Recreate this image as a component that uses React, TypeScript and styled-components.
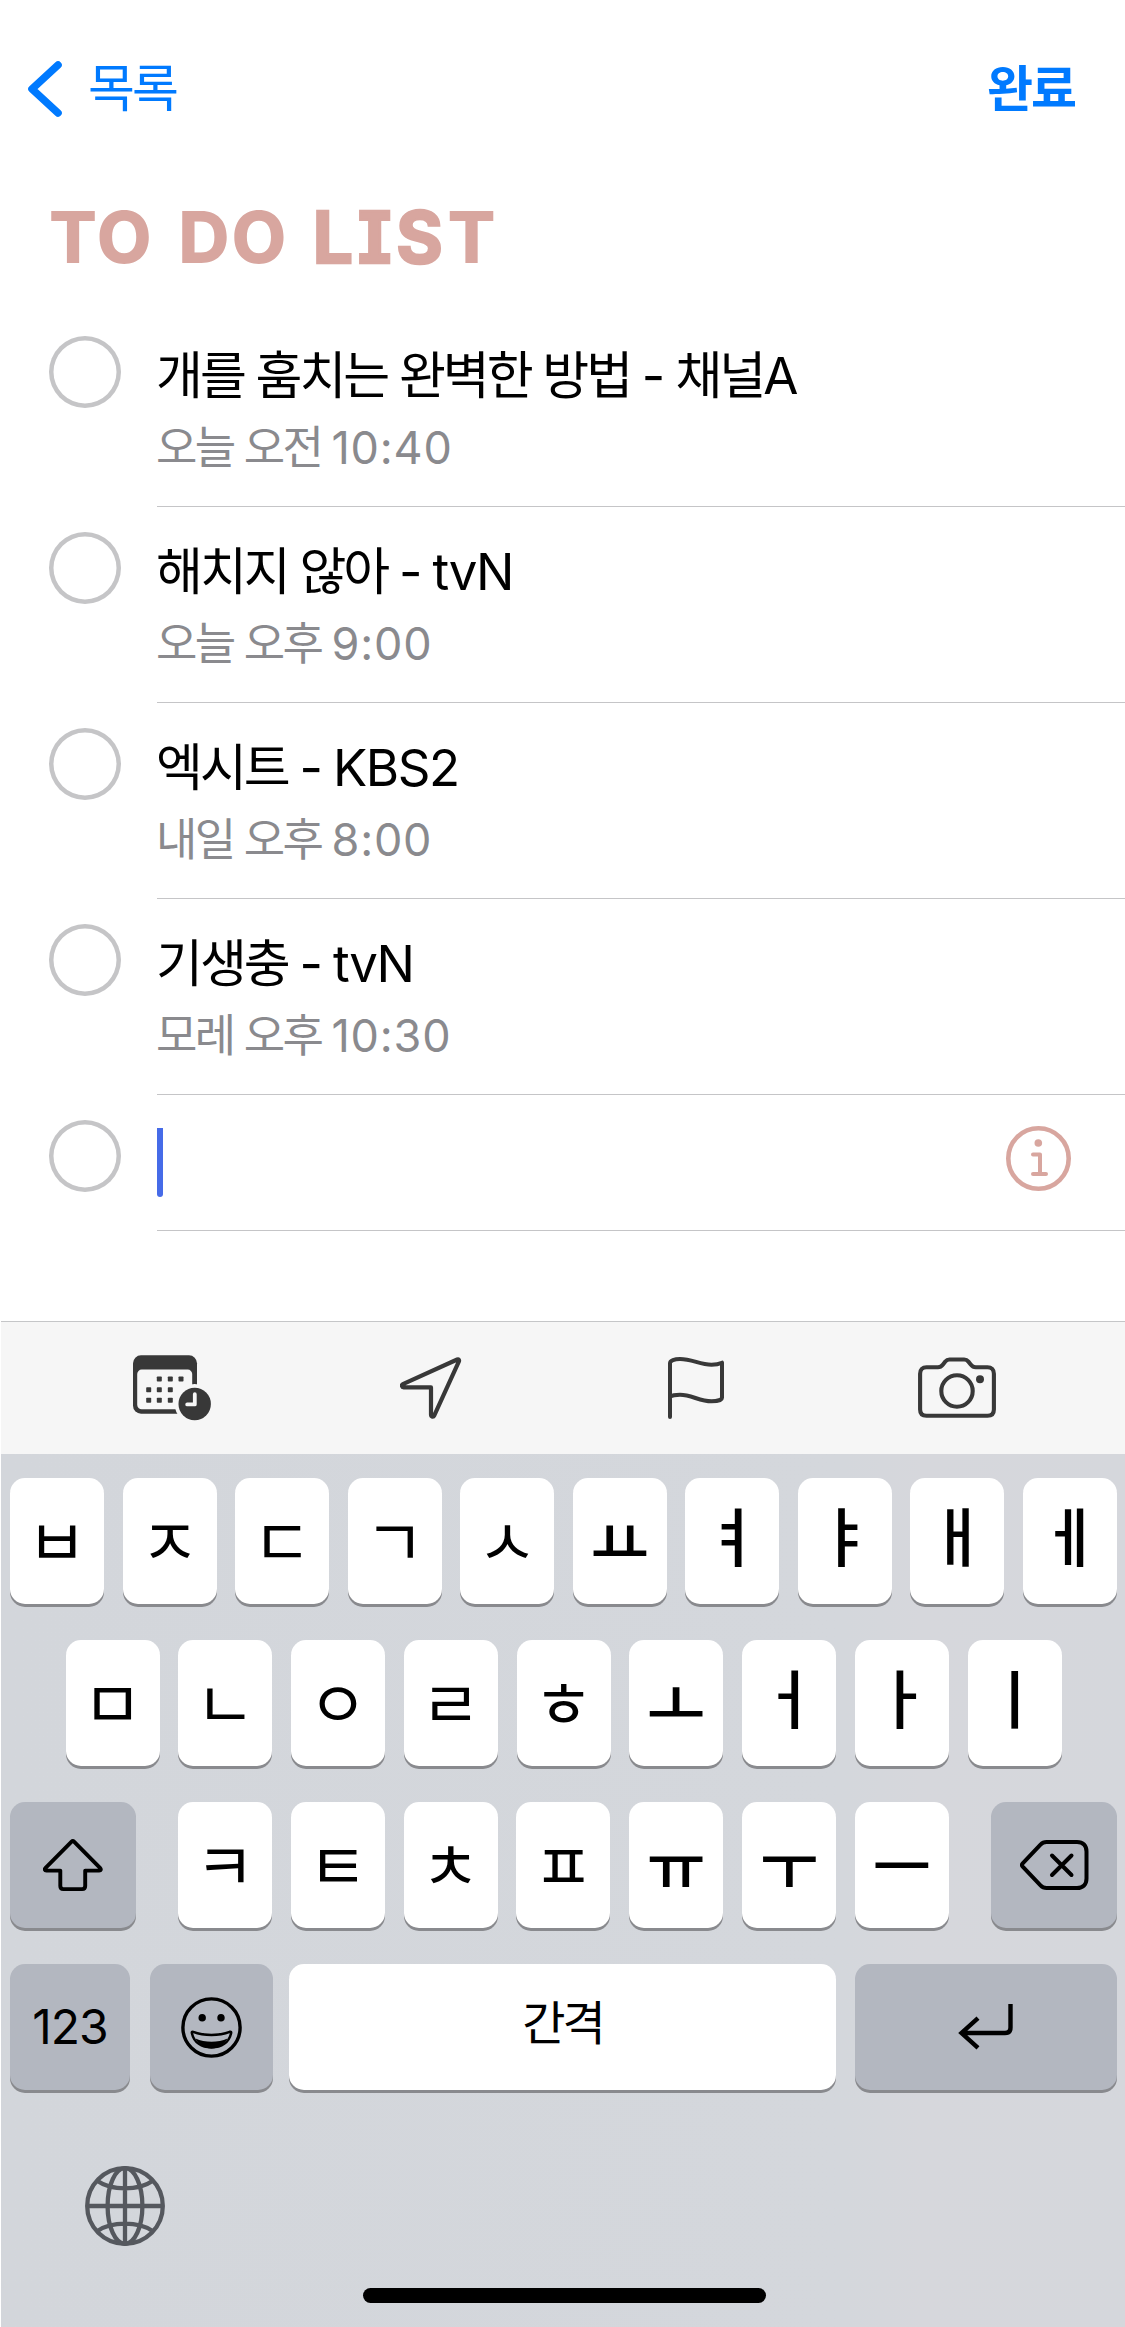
import React from "react";
import styled, { createGlobalStyle } from "styled-components";

const INK = "#383838";
const ROSE = "#d8a69f";
const BLUE = "#007aff";

const GlobalStyle = createGlobalStyle`
  * { box-sizing: border-box; }
  html, body { margin: 0; padding: 0; background: #fff; }
  body { font-family: Inter, "Noto Sans CJK KR", sans-serif; color: #000; }
`;

const Screen = styled.div`
  width: 1125px;
  height: 2327px;
  display: flex;
  flex-direction: column;
  background: #fff;
  overflow: hidden;
  white-space: nowrap;
`;

const Header = styled.header`
  height: 178px;
  padding: 0 50px 0 27px;
  display: flex;
  align-items: center;
  justify-content: space-between;
  color: ${BLUE};
`;

const BackLink = styled.div`
  display: flex;
  align-items: center;
  gap: 25px;
`;

const NavLabel = styled.span<{ $bold?: boolean }>`
  height: 60px;
  line-height: 60px;
  font-size: ${(p) => (p.$bold ? 50 : 51)}px;
  font-weight: ${(p) => (p.$bold ? 700 : 400)};
  letter-spacing: ${(p) => (p.$bold ? -2 : -3)}px;
`;

const Title = styled.h1`
  margin: 0;
  height: 132px;
  padding: 12px 0 0 49px;
  display: flex;
  line-height: 94px;
  font-size: 71px;
  font-weight: 800;
  letter-spacing: 2px;
  word-spacing: 7px;
  font-feature-settings: "cv08" 1;
  white-space: pre;
  color: ${ROSE};
`;

const SoftLetters = styled.span`
  font-weight: 700;
  letter-spacing: 4.7px;
  -webkit-text-stroke: 2.5px ${ROSE};
  stroke-linejoin: round;
`;

const List = styled.main`
  height: 1011px;
  display: flex;
  flex-direction: column;
`;

const Item = styled.section<{ $compact?: boolean }>`
  height: ${(p) => (p.$compact ? 136 : 196)}px;
  padding-left: 49px;
  display: flex;
  gap: 36px;
`;

const Check = styled.span`
  width: 72px;
  height: 72px;
  margin-top: 26px;
  box-shadow: inset 0 0 0 4.5px #c5c5c7;
  border-radius: 50%;
`;

const ItemBody = styled.div`
  flex: 1;
  height: 100%;
  padding-top: 34px;
  transform: translateY(1px);
  border-bottom: 1px solid #c5c5c7;
`;

const ItemTitle = styled.div`
  height: 62px;
  margin-left: -1px;
  line-height: 62px;
  font-size: 51px;
  letter-spacing: -3px;
  word-spacing: 0.3px;
`;

const ItemTime = styled.div`
  height: 56px;
  margin: 13px 0 0 -1px;
  line-height: 56px;
  font-size: 45px;
  letter-spacing: -2.7px;
  word-spacing: 0.4px;
  color: #8a8a8e;
`;

const Latin = styled.span<{ $track: number }>`
  letter-spacing: ${(p) => p.$track}px;
`;

const DraftBody = styled(ItemBody)`
  padding: 0 54px 0 0;
  display: flex;
  justify-content: space-between;
`;

const Caret = styled.span`
  width: 6px;
  height: 69px;
  margin-top: 33px;
  border-radius: 0 0 3px 3px;
  background: #466be8;
`;

const InfoIconBox = styled.span`
  margin-top: 31px;
`;

const Toolbar = styled.nav`
  height: 133px;
  margin-left: 1px;
  padding-left: 132px;
  border-top: 1px solid #c5c6c8;
  display: grid;
  grid-template-columns: 267px 268px 250px 1fr;
  align-items: center;
  background: #f6f6f6;
  svg { display: block; }
`;

const Keyboard = styled.div`
  flex: 1;
  margin-left: 1px;
  padding: 24px 8px 0 9px;
  display: flex;
  flex-direction: column;
  gap: 36px;
  background: linear-gradient(90deg, #d3d6db 0%, #d4d7dc 75%, #d6d7dc 82%, #d5d7dc 100%);
`;

const KeyRow = styled.div<{ $inset?: number }>`
  height: 126px;
  padding: 0 ${(p) => p.$inset ?? 0}px;
  display: flex;
  justify-content: space-between;
`;

const KeyGroup = styled.div`
  width: 771px;
  display: flex;
  justify-content: space-between;
`;

const Key = styled.div<{ $w?: number; $dark?: boolean }>`
  width: ${(p) => p.$w ?? 94}px;
  height: 126px;
  border-radius: 15px;
  display: flex;
  align-items: center;
  justify-content: center;
  background: ${(p) => (p.$dark ? "#b3b7c0" : "#fff")};
  box-shadow: 0 3px 0 #898a8e;
`;

const BottomRow = styled.div`
  height: 126px;
  display: grid;
  grid-template-columns: 139.5px 139.5px 566px 262px;
`;

type JamoKind = "consonant" | "wide" | "tall";

const jamoStyles: Record<JamoKind, { size: number; weight: number; lift: number }> = {
  consonant: { size: 65, weight: 400, lift: 6 },
  wide: { size: 64, weight: 500, lift: 7 },
  tall: { size: 64, weight: 500, lift: 16 },
};

const Jamo = styled.span<{ $kind: JamoKind }>`
  height: 80px;
  line-height: 80px;
  margin-bottom: ${(p) => jamoStyles[p.$kind].lift}px;
  font-family: "Noto Sans CJK KR", sans-serif;
  font-size: ${(p) => jamoStyles[p.$kind].size}px;
  font-weight: ${(p) => jamoStyles[p.$kind].weight};
`;

const KeyLabel = styled.span<{ $size: number; $track: number; $lift?: number }>`
  height: 60px;
  line-height: 60px;
  margin-bottom: ${(p) => p.$lift ?? 0}px;
  font-size: ${(p) => p.$size}px;
  letter-spacing: ${(p) => p.$track}px;
`;

const GlobeRow = styled.div`
  padding: 40px 0 0 75px;
  height: 126px;
`;

const HomeBar = styled.div`
  width: 403px;
  height: 15px;
  margin-left: 353px;
  border-radius: 8px;
  background: #000;
`;

const BackIcon = () => (
  <svg width="36" height="58" viewBox="0 0 36 58" fill="none" stroke={BLUE} strokeWidth="7.6" strokeLinecap="round" strokeLinejoin="round">
    <path d="M31 5 5 29 31 53" />
  </svg>
);

const InfoIcon = () => (
  <svg width="65" height="65" viewBox="0 0 65 65" fill="none" stroke={ROSE} strokeWidth="4.6" strokeLinecap="round" strokeLinejoin="round">
    <circle cx="32.5" cy="32.5" r="30.2" />
    <circle cx="32.3" cy="17" r="3.8" fill={ROSE} stroke="none" />
    <path d="M27 28.5h7v19.5M27 48h13" strokeWidth="4" />
  </svg>
);

const dots = [
  [26.3, 24], [37.3, 24], [48, 24],
  [15.7, 34.7], [26.3, 34.7], [37.3, 34.7],
  [15.7, 45.3], [26.3, 45.3], [37.3, 45.3],
];

const CalendarIcon = () => (
  <svg width="78" height="66" viewBox="0 0 78 66">
    <rect x="0" y="0.3" width="64" height="58.4" rx="8" fill={INK} />
    <rect x="4.2" y="14.6" width="55" height="39.6" rx="4.5" fill="#f6f6f6" />
    {dots.map(([x, y]) => (
      <rect key={`${x}-${y}`} x={x - 2.5} y={y - 2.5} width="5" height="5" rx="0.8" fill={INK} />
    ))}
    <circle cx="61.7" cy="49" r="20" fill="#f6f6f6" />
    <circle cx="61.7" cy="49" r="16.2" fill={INK} />
    <path d="M61.8 39.2v10.2h-7.6" fill="none" stroke="#f6f6f6" strokeWidth="3.8" strokeLinecap="round" strokeLinejoin="round" />
  </svg>
);

const LocationIcon = () => (
  <svg width="62" height="63" viewBox="0 0 62 63" fill="none" stroke={INK} strokeWidth="4.2" strokeLinejoin="round">
    <path d="M57.2 2.5 2.9 27.2c-1.6.8-1.1 3.2.7 3.2H31V57.6c0 2.4 2.4 2.7 3.2 1L58.8 4.6c.7-1.5-.2-2.7-1.6-2.1Z" />
  </svg>
);

const FlagIcon = () => (
  <svg width="57" height="63" viewBox="0 0 57 63" fill="none" stroke={INK} strokeWidth="4" strokeLinecap="round" strokeLinejoin="round">
    <path d="M2 60V6.2C2 3.6 6.5 2 12 2c12 0 20 5.7 31.5 5.7 4.5 0 7.5-.6 10.5-2v35c0 2-4.5 3.6-10.5 3.6C31.5 44.3 23.5 37.8 12 37.8c-4.5 0-8 .7-10 2" />
  </svg>
);

const CameraIcon = () => (
  <svg width="78" height="62" viewBox="0 0 78 62" fill="none" stroke={INK} strokeWidth="4.1" strokeLinejoin="round">
    <path d="M8.5 10.3H20c2.5 0 3.6-1 5-2.8l2.3-2.9c1.2-1.5 2.3-2.1 4.2-2.1h14.7c1.9 0 3 .6 4.2 2.1l2.3 2.9c1.4 1.800 2.5 2.8 5 2.8h11.8c4 0 6.4 2.4 6.4 6.4v35.7c0 4-2.4 6.3-6.4 6.3h-61c-4 0-6.4-2.3-6.4-6.300V16.7c0-4 2.4-6.4 6.4-6.4Z" />
    <circle cx="39" cy="34" r="15.7" />
    <circle cx="62" cy="22.2" r="4" fill={INK} stroke="none" />
  </svg>
);

const ShiftIcon = () => (
  <svg width="60" height="53" viewBox="0 0 60 53" fill="none" stroke="#000" strokeWidth="3.9" strokeLinejoin="round">
    <path d="M28.6 2.6 2.6 28.8c-1.4 1.5-.8 2.8.8 2.8h13.9v15.5c0 2 1 3 3 3h18.9c2 0 3-1 3-3V31.6h14c1.6 0 2.2-1.3.8-2.8L31 2.6c-.8-.8-1.6-.8-2.4 0Z" />
  </svg>
);

const DeleteIcon = () => (
  <svg width="69" height="50" viewBox="0 0 69 50" fill="none" stroke="#000" strokeWidth="4" strokeLinecap="round" strokeLinejoin="round">
    <path d="M2.7 23.3 20.5 4.6C22.3 2.7 24 2 26.5 2H57c6 0 9.5 3.5 9.5 9.5v27c0 6-3.5 9.5-9.5 9.5H26.5c-2.5 0-4.2-.7-6-2.6L2.7 26.7c-1-1.1-1-2.3 0-3.4Z" />
    <path d="m32 15.5 19.5 19.5M51.5 15.5 32 35" />
  </svg>
);

const ReturnIcon = () => (
  <svg width="56" height="47" viewBox="0 0 56 47" fill="none" stroke="#000" strokeWidth="4.4">
    <path d="M52.5 0v23.5c0 3.6-1.8 5.5-5.5 5.5H4M20 14.2 3.5 29 20 43.8" />
  </svg>
);

const SmileIcon = () => (
  <svg width="61" height="61" viewBox="0 0 61 61" fill="none" stroke="#000" strokeWidth="3.4">
    <circle cx="30.5" cy="30.5" r="28.6" />
    <ellipse cx="21.2" cy="20.7" rx="3.7" ry="3.8" fill="#000" stroke="none" />
    <ellipse cx="40" cy="20.7" rx="3.7" ry="3.8" fill="#000" stroke="none" />
    <path d="M12.2 34.800c11 4.2 25.5 4.2 36.5 0 1.2-.4 1.7.2 1.4 1.4C48 45.5 40.5 50.4 30.5 50.4S13 45.5 10.9 36.2c-.3-1.2.2-1.8 1.3-1.4Z" strokeWidth="2.5" />
    <path d="M14.5 41.5c9.5 4.3 22.5 4.3 32 0-3 6.3-9 9.8-16 9.8s-13-3.5-16-9.8Z" fill="#000" stroke="none" />
  </svg>
);

const GlobeIcon = () => (
  <svg width="80" height="80" viewBox="0 0 80 80" fill="none" stroke="#55585e" strokeWidth="4.3">
    <circle cx="40" cy="40" r="37.8" />
    <ellipse cx="40" cy="40" rx="17.4" ry="37.8" />
    <path d="M40 2v76M2 40h76M12.5 15c14 9.8 41 9.8 55 0M12.5 65c14-9.8 41-9.8 55 0" />
  </svg>
);

const items = [
  ["개를 훔치는 완벽한 방법 - 채널A", "오늘 오전 10:40"],
  ["해치지 않아 - tvN", "오늘 오후 9:00"],
  ["엑시트 - KBS2", "내일 오후 8:00"],
  ["기생충 - tvN", "모레 오후 10:30"],
];

/* Hangul is set tighter than the Latin letters and digits beside it. */
const MixedText = ({ text, track }: { text: string; track: number }) => (
  <>
    {text.split(/([A-Za-z0-9:-]+)/).map((run, i) =>
      i % 2 ? (
        <Latin key={i} $track={track}>
          {run}
        </Latin>
      ) : (
        run
      )
    )}
  </>
);

const kindOf = (c: string): JamoKind =>
  c < "ㅏ" ? "consonant" : "ㅛㅗㅠㅜㅡ".includes(c) ? "wide" : "tall";

const Letters = ({ chars }: { chars: string }) => (
  <>
    {[...chars].map((c) => (
      <Key key={c}>
        <Jamo $kind={kindOf(c)}>{c}</Jamo>
      </Key>
    ))}
  </>
);

export default function App() {
  return (
    <Screen>
      <GlobalStyle />
      <Header>
        <BackLink>
          <BackIcon />
          <NavLabel>목록</NavLabel>
        </BackLink>
        <NavLabel $bold>완료</NavLabel>
      </Header>
      <Title>
        {"TO DO "}
        <SoftLetters>LIS</SoftLetters>T
      </Title>
      <List>
        {items.map(([title, time]) => (
          <Item key={title}>
            <Check />
            <ItemBody>
              <ItemTitle>
                <MixedText text={title} track={-1.5} />
              </ItemTitle>
              <ItemTime>
                <MixedText text={time} track={0.8} />
              </ItemTime>
            </ItemBody>
          </Item>
        ))}
        <Item $compact>
          <Check />
          <DraftBody>
            <Caret />
            <InfoIconBox>
              <InfoIcon />
            </InfoIconBox>
          </DraftBody>
        </Item>
      </List>
      <Toolbar>
        <CalendarIcon />
        <LocationIcon />
        <FlagIcon />
        <CameraIcon />
      </Toolbar>
      <Keyboard>
        <KeyRow>
          <Letters chars="ㅂㅈㄷㄱㅅㅛㅕㅑㅐㅔ" />
        </KeyRow>
        <KeyRow $inset={55.5}>
          <Letters chars="ㅁㄴㅇㄹㅎㅗㅓㅏㅣ" />
        </KeyRow>
        <KeyRow>
          <Key $w={126} $dark>
            <ShiftIcon />
          </Key>
          <KeyGroup>
            <Letters chars="ㅋㅌㅊㅍㅠㅜㅡ" />
          </KeyGroup>
          <Key $w={126} $dark>
            <DeleteIcon />
          </Key>
        </KeyRow>
        <BottomRow>
          <Key $w={120} $dark>
            <KeyLabel $size={48} $track={-1}>123</KeyLabel>
          </Key>
          <Key $w={123} $dark>
            <SmileIcon />
          </Key>
          <Key $w={547}>
            <KeyLabel $size={47} $track={-3} $lift={8}>간격</KeyLabel>
          </Key>
          <Key $w={262} $dark>
            <ReturnIcon />
          </Key>
        </BottomRow>
        <GlobeRow>
          <GlobeIcon />
        </GlobeRow>
        <HomeBar />
      </Keyboard>
    </Screen>
  );
}
